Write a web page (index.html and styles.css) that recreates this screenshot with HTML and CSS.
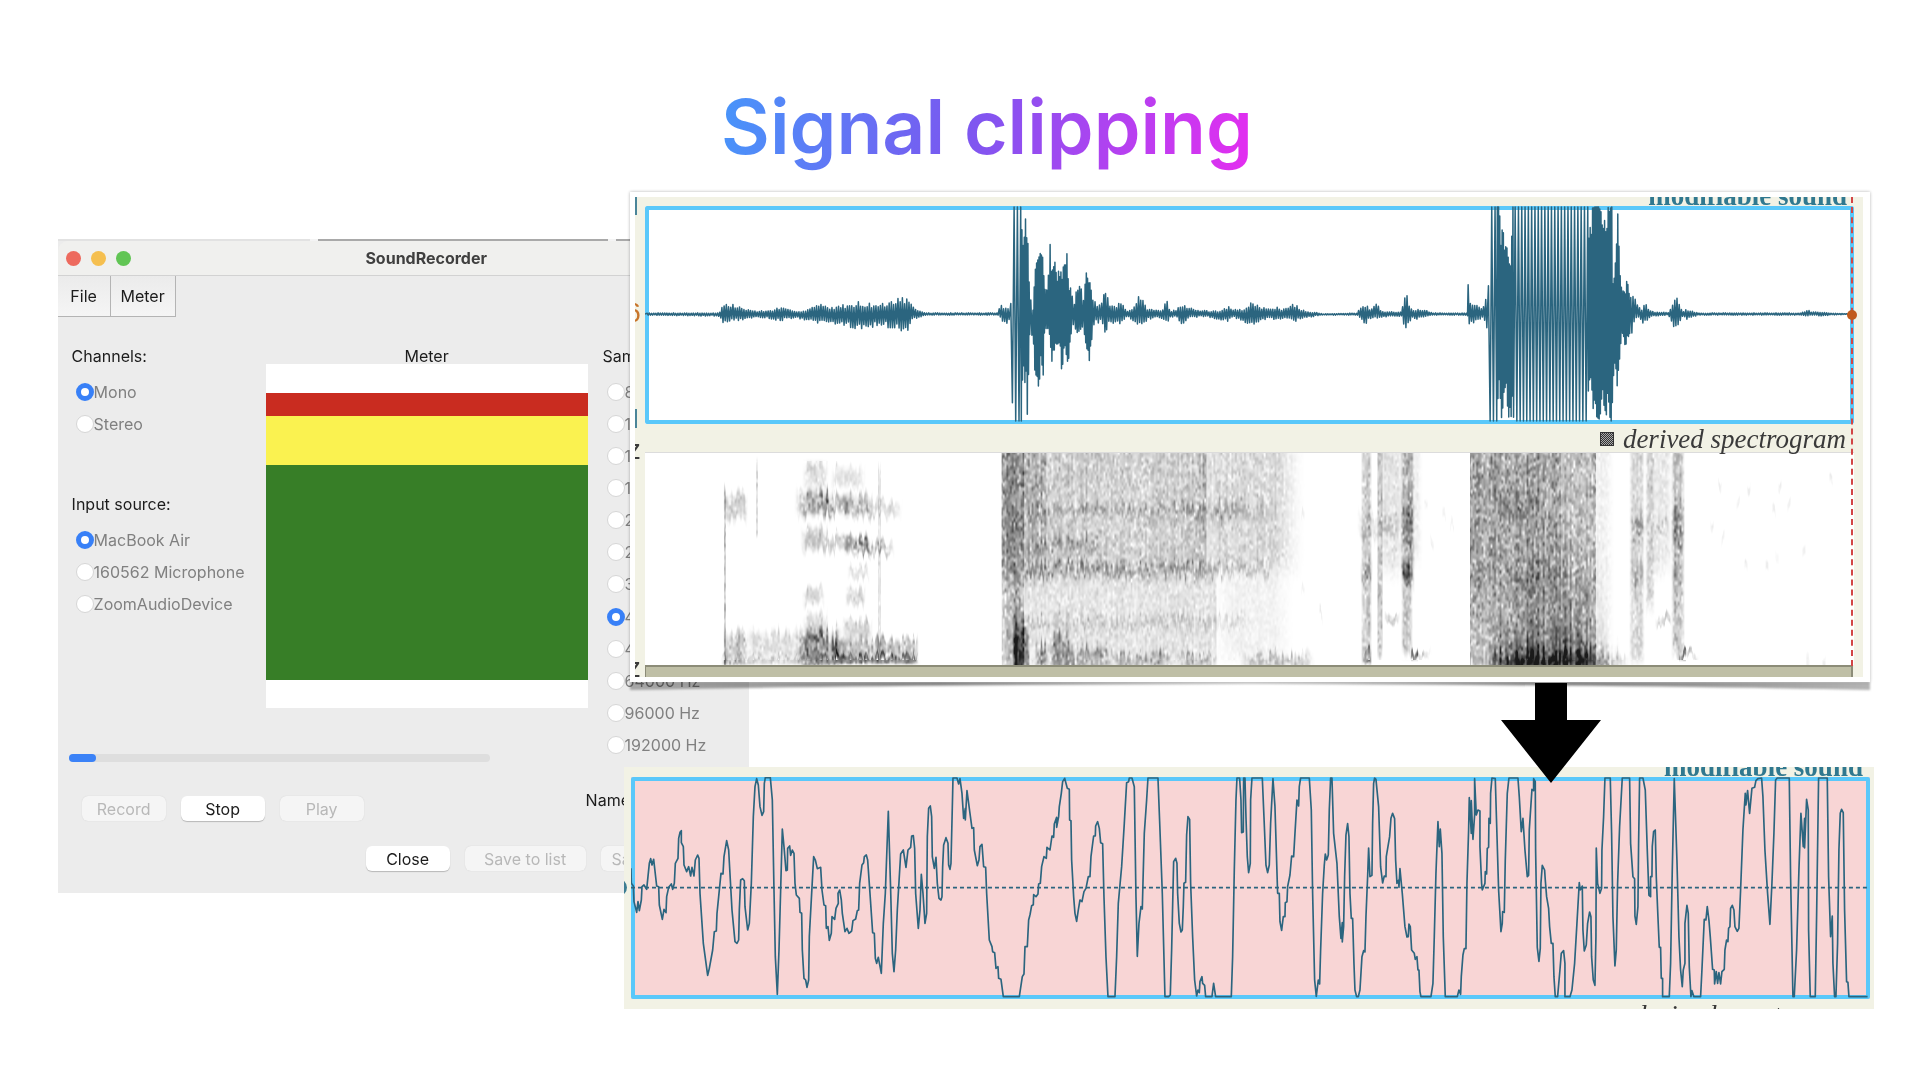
FILE: index.html
```html
<!DOCTYPE html>
<html lang="en">
<head>
<meta charset="utf-8">
<title>Signal clipping</title>
<link rel="stylesheet" href="styles.css">
</head>
<body>
<main class="slide">
  <h1 class="title"><span class="title-text">Signal clipping</span></h1>

  <section class="recorder" aria-label="SoundRecorder">
    <div class="backdrop-edge"><i class="edge-light"></i><i class="edge-dark"></i><i class="edge-dark"></i></div>
    <header class="titlebar">
      <div class="lights"><i class="light red"></i><i class="light amber"></i><i class="light green"></i></div>
      <h2 class="window-name">SoundRecorder</h2>
    </header>
    <nav class="menubar">
      <button class="menu menu-file">File</button>
      <button class="menu menu-meter">Meter</button>
    </nav>
    <div class="settings">
      <div class="sources">
        <fieldset class="group">
          <legend class="label">Channels:</legend>
          <div class="options">
            <label class="option"><input type="radio" name="channels" checked>Mono</label>
            <label class="option"><input type="radio" name="channels">Stereo</label>
          </div>
        </fieldset>
        <fieldset class="group">
          <legend class="label">Input source:</legend>
          <div class="options">
            <label class="option"><input type="radio" name="source" checked>MacBook Air</label>
            <label class="option"><input type="radio" name="source">160562 Microphone</label>
            <label class="option"><input type="radio" name="source">ZoomAudioDevice</label>
          </div>
        </fieldset>
      </div>
      <div class="meter">
        <div class="label meter-label">Meter</div>
        <div class="bands"><i class="band-red"></i><i class="band-yellow"></i><i class="band-green"></i></div>
      </div>
      <fieldset class="group">
        <legend class="label">Sampling frequency:</legend>
        <div class="options rates">
          <label class="option"><input type="radio" name="rate">8000 Hz</label>
          <label class="option"><input type="radio" name="rate">11025 Hz</label>
          <label class="option"><input type="radio" name="rate">12000 Hz</label>
          <label class="option"><input type="radio" name="rate">16000 Hz</label>
          <label class="option"><input type="radio" name="rate">22050 Hz</label>
          <label class="option"><input type="radio" name="rate">24000 Hz</label>
          <label class="option"><input type="radio" name="rate">32000 Hz</label>
          <label class="option"><input type="radio" name="rate" checked>44100 Hz</label>
          <label class="option"><input type="radio" name="rate">48000 Hz</label>
          <label class="option"><input type="radio" name="rate">64000 Hz</label>
          <label class="option"><input type="radio" name="rate">96000 Hz</label>
          <label class="option"><input type="radio" name="rate">192000 Hz</label>
        </div>
      </fieldset>
    </div>
    <div class="progress"><i class="progress-done"></i></div>
    <div class="actions transport">
      <button class="action" disabled>Record</button>
      <button class="action">Stop</button>
      <button class="action" disabled>Play</button>
      <span class="label name-label">Name:</span>
    </div>
    <div class="actions closing">
      <button class="action">Close</button>
      <button class="action wide" disabled>Save to list</button>
      <button class="action wide" disabled>Save &amp; Close</button>
    </div>
  </section>

  <section class="zoomed" aria-label="Clipped signal, zoomed in">
    <i class="origin-dot"></i>
    <div class="cut-top"><span class="sound-name">modifiable sound</span></div>
    <div class="frame pink">
      <svg class="trace" viewBox="0 0 3717 666" preserveAspectRatio="none" aria-hidden="true">
        <path class="zero" d="M0 332H3717"/>
        <g transform="translate(-33 -81)"><path d="M33 355L34 400 40 408 42 455 50 487 54 455 58 482 64 450 66 410 72 405 80 418 88 340 92 326 96 345 101 328 110 408 116 410 118 465 127 508 132 478 138 488 140 440 146 412 154 402 158 418 163 400 166 340 174 325 176 265 180 247 184 242 184 278 190 290 192 345 200 365 206 350 212 378 216 352 222 378 226 330 233 315 237 325 240 430 250 580 263 676 268 655 278 600 283 545 289 543 291 490 300 400 303 370 309 372 312 320 320 272 326 300 336 480 345 575 351 580 356 570 358 480 362 390 368 386 373 392 375 470 383 540 388 520 394 400 400 200 405 110 410 86 415 105 420 170 426 196 431 185 433 100 436 83 451 83 457 150 462 420 466 620 472 733 477 600 482 420 487 237 492 290 498 362 502 360 503 295 509 288 512 316 517 300 522 310 525 400 529 435 538 445 540 487 545 490 547 600 552 685 557 690 561 712 566 690 568 560 575 430 581 320 586 330 592 356 602 352 606 420 612 465 617 467 619 535 624 530 628 571 634 550 636 500 644 508 648 475 655 460 654 430 659 420 664 450 667 490 675 545 681 535 687 550 695 543 699 512 707 507 712 482 716 480 719 400 726 345 731 338 733 320 739 315 743 330 750 430 758 548 763 550 766 625 770 640 775 622 784 670 790 520 796 430 805 184 812 420 817 610 822 665 827 600 832 480 842 312 850 300 858 352 864 300 872 292 875 258 880 257 884 295 887 430 895 535 900 480 904 373 909 430 915 520 920 490 922 260 926 175 931 168 935 200 937 320 943 355 948 322 952 400 957 445 963 450 966 440 968 350 971 285 978 263 984 280 986 345 990 358 993 340 998 130 999 84 1011 84 1016 102 1020 86 1026 130 1031 205 1036 175 1036 210 1041 122 1050 190 1056 235 1061 233 1063 300 1072 347 1077 330 1080 290 1086 283 1091 350 1097 352 1100 430 1108 570 1116 590 1118 605 1124 608 1128 655 1134 650 1136 685 1143 688 1150 740 1198 740 1207 680 1212 672 1215 590 1222 590 1226 510 1230 495"/></g>
        <g transform="translate(1197 -81)"><path d="M0 495L5 467 10 464 11 434 18 440 24 432 26 402 31 400 35 350 42 320 49 325 51 292 60 300 66 258 71 262 73 222 80 202 80 232 86 200 88 170 94 130 98 95 104 85 112 115 118 118 119 210 123 212 125 330 131 440 135 490 140 514 145 480 150 450 156 455 162 425 168 415 175 380 180 380 183 320 191 258 196 258 197 228 203 215 208 235 212 278 218 281 222 440 228 620 234 740 255 740 260 620 265 460 275 350 283 220 290 98 296 95 298 84 306 84 313 110 318 440 322 619 327 520 333 470 337 477 339 400 343 250 350 150 354 84 384 84 390 240 397 430 405 740 416 740 421 735 425 600 431 335 437 325 441 340 443 430 448 520 453 546 457 540 460 470 462 400 467 397 470 255 474 200 479 208 482 400 488 560 494 690 500 738 504 720 508 728 510 695 516 680 518 700 524 706 527 740 546 740 551 700 557 740 604 740 608 620 613 360 618 150 621 84 629 84 633 150 635 248 640 246 641 84 645 84 648 200 652 320 656 368 661 340 662 150 666 84 697 84 702 200 708 345 713 368 718 345 722 220 729 86 735 170 743 430 748 430 750 515 755 541 760 500 765 500 766 458 771 455 773 410 780 375 785 318 791 320 795 250 801 150 806 168 808 110 812 84 838 84 844 180 848 430 854 690 859 739 865 690 869 702 872 600 878 430 883 345 886 312 890 330 895 315 898 180 902 84 906 84 911 250 921 340 928 500 933 565 937 518 937 576 941 530 944 380 948 255 953 221 957 260 960 430 964 505 968 505 972 640 975 720 980 740 985 740 990 720 996 620 1001 602 1005 606 1008 500 1013 380 1016 294 1020 380 1026 376 1028 220 1031 100 1034 84 1038 88 1046 170 1052 350 1058 399 1063 378 1068 380 1069 320 1079 260 1083 205 1088 190 1094 206 1097 330 1101 400 1106 390 1107 412 1110 356 1117 430 1125 530 1131 561 1135 560 1137 522 1141 530 1145 600 1153 610 1156 628 1161 620 1164 660 1167 660 1170 725 1173 740 1203 740 1209 700 1213 560 1218 370 1224 215 1228 290 1231 237 1236 310 1240 560 1246 740 1260 740"/></g>
        <g transform="translate(2457 -81)"><path d="M0 740L22 740 27 720 32 733 34 680 39 615 43 596 48 596 51 400 56 240 58 143 64 250 64 152 69 268 74 195 74 86 79 195 84 180 90 183 90 290 95 400 97 420 105 400 106 365 110 372 112 295 116 292 117 205 121 220 122 130 126 84 136 86 140 220 146 420 153 545 157 520 158 485 163 487 166 330 172 130 177 84 204 84 208 140 214 245 219 205 225 300 232 380 236 376 238 240 246 118 251 122 251 86 256 95 257 300 262 592 267 634 271 595 273 400 277 346 284 360 286 390 290 440 296 475 299 530 304 580 309 580 312 680 316 740 323 740 330 660 334 610 341 602 345 640 345 740 360 740 366 720 374 640 381 520 388 398 391 420 397 408 399 540 403 603 409 585 413 520 419 486 423 500 425 620 430 690 435 706 438 560 439 294 443 400 450 430 455 415 456 300 461 200 465 84 481 84 485 250 489 500 495 648 499 600 503 400 509 230 517 84 539 84 542 280 549 380 554 386 555 498 559 523 564 470 566 280 569 84 579 84 586 120 592 300 597 436 602 440 602 380 606 380 607 290 611 245 616 240 619 380 624 500 628 592 632 592 634 685 638 685 638 740 658 740 662 640 667 360 673 86 681 330 687 560 692 660 697 710 700 660 705 640 705 520 711 466 715 490 718 650 723 740 726 722 732 740 752 740 756 660 763 508 768 510 772 470 777 510 781 560 788 658 793 660 794 702 799 665 803 700 807 668 812 702 816 665 823 658 825 600 830 570 834 575 836 535 840 530 842 475 847 466 852 480 855 530 862 544 867 535 872 420 879 240 886 130 888 165 893 122 899 190 906 115 914 112 918 92 924 86 935 84 939 140 945 300 953 430 960 523 966 400 972 250 977 90 982 84 1018 84 1022 380 1029 740 1033 740 1040 600 1047 360 1053 190 1060 290 1064 205 1064 294 1070 148 1075 180 1076 540 1081 740 1096 740 1100 500 1106 84 1132 84 1136 380 1142 560 1147 498 1149 640 1154 740 1158 740 1163 580 1167 300 1171 190 1175 178 1180 188 1184 480 1190 695 1194 697 1197 740 1253 740"/></g>
      </svg>
    </div>
    <div class="cut-bottom"><em class="derived">derived spectrogram</em></div>
  </section>

  <svg class="arrow" viewBox="0 0 100 100" aria-hidden="true"><path d="M34 0H66V37H100L50 100 0 37H34Z"/></svg>

  <svg class="curl" viewBox="0 0 1241 10" preserveAspectRatio="none" aria-hidden="true">
    <defs><linearGradient id="curl-tone"><stop offset="0" stop-color="#b4b4b4"/><stop offset=".25" stop-color="#808080"/><stop offset=".5" stop-color="#d0d0d0"/><stop offset=".75" stop-color="#808080"/><stop offset="1" stop-color="#b4b4b4"/></linearGradient></defs>
    <path d="M0 0H1241V8Q1000 3 620 2 240 3 0 8Z" fill="url(#curl-tone)"/>
  </svg>
  <section class="paper" aria-label="Recorded sound and spectrogram">
    <div class="sheet">
      <i class="tick tick-top"></i><i class="tick tick-bottom"></i>
      <span class="scale scale-mid">6</span><span class="scale scale-high">z</span><span class="scale scale-low">z</span>
      <div class="cut-top"><span class="sound-name">modifiable sound</span></div>
      <div class="frame">
        <svg class="trace" viewBox="0 0 1209 218" preserveAspectRatio="none" aria-hidden="true"><path id="recording"/></svg>
      </div>
      <div class="caption">
        <svg class="swatch" viewBox="0 0 14 14" aria-hidden="true"><defs><pattern id="dots" width="2" height="2" patternUnits="userSpaceOnUse"><path d="M0 0h1v1H0zM1 1h1v1H1z" fill="#aaa"/></pattern></defs><path d="M0 0h14v14H0z" fill="#333"/><path d="M1 1h12v12H1z" fill="url(#dots)"/></svg>
        <em class="derived">derived spectrogram</em>
      </div>
      <canvas class="spectrogram" id="spectrogram" width="1209" height="212"></canvas>
      <div class="scrollbar"></div>
      <i class="cursor"></i><i class="cursor-dot"></i>
    </div>
  </section>
</main>
<script src="draw.js"></script>
</body>
</html>
```
FILE: styles.css
```css
* { box-sizing: border-box; }
body {
  margin: 0;
  background: #fff;
  color: #1c1c1c;
  font-family: Inter, "Liberation Sans", sans-serif;
  font-size: 16px;
  line-height: 20px;
}
i { display: block; font-style: normal; }
button, input { font: inherit; margin: 0; }
.slide { position: relative; min-height: 1080px; overflow: hidden; }

.title {
  margin: 0;
  padding: 77px 0 0 54px;
  text-align: center;
  font-size: 75px;
  font-weight: 600;
  line-height: 100px;
}
.title-text {
  background: linear-gradient(100deg, #4796fa 0%, #7a58f0 45%, #e52df0 100%);
  -webkit-background-clip: text;
  background-clip: text;
  color: transparent;
}

/* Recorder window */
.recorder {
  position: absolute;
  left: 3%;
  top: 239px;
  width: 36%;
  padding-bottom: 22px;
  background: #ececec;
  overflow: hidden;
  white-space: nowrap;
}
.backdrop-edge { display: flex; gap: 8px; height: 2px; background: #f4f4f4; }
.edge-light { flex: 0 0 252px; background: #e2e2e2; }
.edge-dark { flex: 0 0 290px; background: #a9a9a9; }
.titlebar {
  display: grid;
  align-items: center;
  height: 35px;
  background: #f0f0ee;
  border-bottom: 1px solid #d2d2d2;
  border-top-left-radius: 10px;
}
.lights { grid-area: 1 / 1; display: flex; gap: 10px; padding-left: 8px; }
.light { width: 15px; height: 15px; border-radius: 50%; }
.red { background: #ed6a5e; }
.amber { background: #f5bf4f; }
.green { background: #61c554; }
.window-name {
  grid-area: 1 / 1;
  margin: 0;
  padding-left: 46px;
  text-align: center;
  font-size: 16px;
  font-weight: 700;
  color: #3f3f3f;
}
.menubar { display: flex; height: 41px; }
.menu {
  padding: 0;
  border: solid #b4b4b4;
  border-width: 0 1px 1px 0;
  background: linear-gradient(#ebebeb, #f5f5f5);
  color: #1c1c1c;
}
.menu-file { width: 53px; }
.menu-meter { width: 65px; }

.settings {
  display: grid;
  grid-template-columns: 194px 322px 1fr;
  padding: 29px 0 0 14px;
}
.group { display: block; min-width: 0; margin: 0; padding: 0; border: 0; }
.group + .group { margin-top: 60px; }
.settings > .group { padding-left: 15px; }
.label { display: block; height: 20px; padding: 0; color: #1c1c1c; }
.meter-label { height: 18px; text-align: center; }
.options { display: flex; flex-direction: column; gap: 12px; padding: 16px 0 0 4px; }
.rates { height: 389px; gap: 0; justify-content: space-between; }
.option { display: flex; align-items: center; height: 20px; color: #808080; }
.option input {
  appearance: none;
  width: 18px;
  height: 18px;
  border: 1px solid #d6d6d6;
  border-radius: 50%;
  background: #fff;
}
.option input:checked { border: 5px solid #3880f7; }
.bands { height: 344px; padding: 29px 0 28px; background: #fff; }
.band-red { height: 23px; background: #c92c20; }
.band-yellow { height: 49px; background: #faf250; }
.band-green { height: 215px; background: #377e27; }

.progress {
  width: 421px;
  height: 8px;
  margin: -1px 0 0 11px;
  border-radius: 4px;
  background: #dedede;
}
.progress-done { width: 27px; height: 8px; border-radius: 4px; background: #3b82f7; }
.actions { display: flex; gap: 15px; }
.transport { margin-top: 34px; padding-left: 24px; }
.closing { margin-top: 25px; padding-left: 308px; }
.action {
  flex: none;
  width: 84px;
  height: 25px;
  padding: 0;
  border: 0;
  border-radius: 6px;
  background: #fff;
  box-shadow: 0 1px 1px #b8b8b8;
  color: #1c1c1c;
}
.action:disabled { background: #f5f5f5; box-shadow: 0 0 1px #c8c8c8; color: #b8b8b8; }
.wide { width: 121px; }
.name-label { margin: -6px 0 0 207px; }

/* Sound pictures */
.paper {
  position: absolute;
  left: 32.8%;
  right: 2.6%;
  top: 192px;
  padding: 5px 7px 5px 5px;
  background: #fff;
  box-shadow: 0 0 3px rgba(0, 0, 0, .3);
}
.curl { position: absolute; left: 32.8%; top: 682px; width: 64.6%; height: 10px; filter: blur(1px); mix-blend-mode: multiply; }
.sheet { position: relative; padding: 0 9px 0 10px; background: #f2f2e5; overflow: hidden; }
.cut-top { display: flex; justify-content: flex-end; align-items: flex-end; height: 9px; padding-right: 7px; overflow: hidden; }
.sound-name {
  flex: none;
  margin-bottom: -5px;
  color: #30788f;
  font-family: "Liberation Serif", serif;
  font-size: 27px;
  font-weight: 700;
  line-height: 30px;
}
.derived { color: #3a3a3a; font-family: "Liberation Serif", serif; font-size: 27px; line-height: 28px; }
.frame { height: 218px; background: #fff; position: relative; }
.frame::before {
  content: "";
  position: absolute;
  inset: 0;
  border: 4px solid #5ac8fa;
  border-radius: 2px;
}
.trace { position: relative; display: block; width: 100%; height: 100%; }
.trace path { fill: none; stroke: #2b657f; stroke-width: 1.5; stroke-linejoin: round; }
.caption { position: relative; display: flex; justify-content: flex-end; align-items: center; gap: 9px; height: 28px; padding: 2px 8px 0 0; }
.swatch { width: 14px; height: 14px; }
.spectrogram { display: block; width: 100%; height: 213px; border-top: 1px solid #dcdcdc; background: #fff; }
.scrollbar { height: 12px; margin-right: 1px; border: solid #8c8c78; border-width: 2px 2px 0 1px; background: #bfbfa6; }
.cursor { position: absolute; top: 0; bottom: 11px; right: 10px; border-left: 2px dashed #d24545; }
.cursor-dot { position: absolute; top: 113px; right: 6px; width: 10px; height: 10px; border-radius: 50%; background: #c05a1c; }
.tick { position: absolute; left: 0; width: 2px; background: #4a8599; }
.tick-top { top: 0; height: 18px; }
.tick-bottom { top: 212px; height: 19px; }
.scale { position: absolute; right: calc(100% - 6px); color: #3a3a3a; font-family: "Liberation Sans", sans-serif; font-size: 27px; }
.scale-mid { top: 106px; color: #c8742a; }
.scale-high { top: 243px; }
.scale-low { top: 461px; }

.zoomed {
  position: absolute;
  left: 32.5%;
  right: 2.4%;
  top: 767px;
  padding: 0 4px 0 7px;
  background: #f2f2e5;
  overflow: hidden;
}
.zoomed .cut-top { height: 10px; padding-right: 7px; }
.zoomed .derived { font-size: 28px; }
.zoomed .frame { height: 222px; }
.pink { background: #f8d5d5; }
.pink .trace path { stroke-width: 5; }
.pink .trace .zero { stroke-width: 5; stroke-dasharray: 12 9; }
.cut-bottom { display: flex; justify-content: flex-end; height: 10px; padding: 2px 6px 0 0; overflow: hidden; }
.origin-dot { position: absolute; left: -14px; top: 112px; width: 17px; height: 17px; border-radius: 50%; background: #3c7c92; }
.arrow { position: absolute; left: 78.2%; top: 683px; width: 100px; height: 100px; }
```
FILE: draw.js
```js
// Seeded generator, so that the drawing is the same on every load.
let seed = 7;
function random() {
  seed = (seed * 1664525 + 1013904223) % 4294967296;
  return seed / 4294967296;
}

// Envelope of the recording: position, height above and depth below zero.
const envelope = [
  [0,1,1],[73,1,2],[77,9,8],[85,9,6],[93,7,6],[101,4,5],[110,3,3],[122,3,4],[134,6,6],[146,3,4],[158,3,5],
  [167,7,8],[173,9,9],[183,6,9],[195,8,10],[203,9,12],[212,11,13],[220,10,13],[228,9,12],[236,9,10],[244,12,13],
  [252,14,15],[259,16,16],[263,11,14],[267,6,5],[273,3,3],[281,1,1],[352,1,1],[354,13,3],[357,8,10],[361,7,8],
  [364,10,6],[366,107,107],[375,107,107],[376,92,107],[377,60,50],[379,78,65],[380,100,60],[382,70,97],
  [384,15,20],[387,5,20],[390,54,63],[392,52,76],[395,65,45],[397,50,68],[399,28,10],[402,18,20],[404,82,20],
  [406,30,48],[408,52,35],[411,36,30],[414,41,30],[416,38,57],[419,45,30],[421,62,45],[423,20,50],[424,30,30],
  [427,8,12],[430,22,18],[434,29,20],[437,18,10],[441,45,40],[444,30,42],[446,20,22],[449,12,8],[455,8,8],
  [459,23,18],[461,20,15],[463,7,5],[469,9,11],[475,10,8],[481,3,3],[487,4,6],[492,17,12],[497,12,12],[501,5,5],
  [510,4,3],[516,4,6],[521,15,9],[524,3,3],[530,4,2],[536,10,10],[542,6,4],[550,4,3],[559,3,2],[567,3,4],
  [575,3,6],[581,7,7],[587,4,3],[595,4,7],[603,10,9],[611,8,9],[619,6,5],[630,6,5],[638,5,4],[648,9,7],
  [654,5,5],[660,2,4],[668,2,2],[677,0,1],[711,1,1],[714,6,5],[719,10,10],[724,4,4],[730,10,4],[736,2,3],
  [754,2,2],[756,6,3],[759,23,21],[762,13,11],[766,5,3],[770,4,5],[777,4,3],[787,1,1],[821,1,1],[822,29,8],
  [825,9,11],[830,8,5],[836,4,4],[839,12,9],[841,18,14],[842,34,107],[844,107,107],[850,107,107],[853,107,60],
  [855,75,100],[859,75,70],[862,55,90],[865,40,105],[867,107,85],[868,107,107],[941,107,107],[944,80,70],
  [948,107,90],[953,107,107],[957,98,80],[961,95,90],[965,107,107],[966,107,107],[967,33,60],[969,45,43],
  [971,76,70],[972,92,60],[974,40,40],[976,25,18],[979,20,32],[981,32,22],[984,20,22],[987,19,14],[989,15,5],
  [993,7,3],[996,5,8],[999,10,8],[1003,5,4],[1007,2,2],[1022,2,1],[1026,10,10],[1028,18,16],[1032,14,11],
  [1036,3,3],[1040,4,5],[1044,3,4],[1052,1,1],[1154,1,1],[1161,4,2],[1164,2,1],[1177,2,2],[1183,1,1],[1207,0,0]
];

function drawRecording() {
  const zero = 108;
  let d = 'M0 ' + zero;
  let i = 0;
  let up = true;
  for (let x = 1; x < 1207;) {
    while (i < envelope.length - 2 && envelope[i + 1][0] < x) i++;
    const a = envelope[i], b = envelope[i + 1];
    const t = (x - a[0]) / (b[0] - a[0]);
    const side = up ? 1 : 2;
    let h = a[side] + (b[side] - a[side]) * t;
    const clipped = h > 102;
    const striped = (x > 868 && x < 942) || (x > 364 && x < 374) || (x > 841 && x < 850);
    x += striped ? 1.65 : h > 20 ? 0.6 : 1.1;
    if (!clipped) h *= h > 20 ? 0.85 + random() * 0.3 : 0.65 + random() * 0.5;
    d += 'L' + x.toFixed(1) + ' ' + (up ? zero - h : zero + h).toFixed(1);
    up = !up;
  }
  document.getElementById('recording').setAttribute('d', d);
}

// Energy patches: left, right, top, bottom, strength, horizontal softness, vertical softness.
const patches = [
  [79,80,45,208,.2,1,12],[82,98,46,58,.18,5,12],[82,98,185,205,.22,5,12],[111,112,12,75,.14,1,10],
  [162,178,45,54,.3,14,14],[180,200,48,55,.22,6,9],[202,222,48,56,.23,7,12],[225,248,53,58,.12,10,8],
  [162,176,82,90,.2,8,12],[182,200,86,92,.16,6,8],[204,220,89,94,.34,7,10],[222,242,93,97,.2,8,7],
  [164,176,16,26,.14,8,12],[192,213,20,28,.1,8,10],[162,174,140,146,.14,6,9],[204,216,140,146,.14,5,9],
  [206,220,117,121,.1,5,7],[233,235,20,190,.1,1,12],[112,145,185,200,.12,14,12],
  [162,185,188,202,.44,14,18],[190,268,190,203,.26,6,8],[202,222,170,182,.15,6,7],[190,268,204,208,.24,5,4],
  [80,270,206,209,.12,6,4],[164,176,168,182,.15,8,12],
  [357,378,0,212,.14,1,3],[357,560,0,110,.19,2,25],[357,400,0,90,.12,2,50],[575,625,0,105,.15,36,25],
  [385,620,115,118,.12,10,8],[385,580,57,59,.1,10,9],[400,440,91,95,.12,22,10],[580,610,54,61,.08,25,12],
  [357,570,124,200,.11,2,20],[590,625,130,195,.05,25,20],[380,590,168,171,.08,20,9],
  [370,381,190,212,.5,4,36],[370,373,135,212,.2,3,30],[393,399,200,212,.3,5,16],[410,420,195,212,.32,7,24],
  [428,460,204,212,.22,10,14],[478,515,205,211,.22,14,9],[542,562,205,211,.16,12,7],[608,655,206,211,.18,16,9],
  [718,724,0,205,.2,3,14],[733,736,0,190,.22,2,18],[740,752,0,100,.1,6,35],[717,750,68,78,.08,6,12],
  [718,724,117,121,.2,4,11],[719,724,198,207,.18,3,4],[743,750,165,168,.18,5,5],
  [759,765,0,125,.27,5,16],[759,764,120,195,.2,4,14],[759,765,66,82,.2,4,20],[759,765,118,123,.18,4,14],
  [766,772,200,204,.34,1,5],[772,776,201,203,.16,11,4],[767,770,0,90,.07,8,30],
  [825,950,0,208,.26,1,10],[825,915,0,120,.11,1,70],[860,885,50,58,.12,18,16],[895,920,150,212,.15,45,80],
  [865,940,200,212,.18,26,50],[856,960,205,212,.2,16,22],[850,975,206,211,.14,10,9],[950,958,0,190,.06,12,25],
  [988,995,0,198,.16,5,18],[1003,1006,0,140,.16,4,26],[1011,1020,0,100,.09,8,30],[989,995,70,78,.14,5,14],
  [989,995,117,125,.14,5,14],[990,1018,70,74,.08,7,9],[1014,1022,165,168,.18,5,5],
  [1030,1035,0,192,.25,5,16],[1030,1035,62,80,.24,5,20],[1030,1035,118,124,.14,4,14],
  [1034,1040,200,204,.34,1,5],[1040,1044,201,203,.16,11,4]
];

// Faint isolated marks: position and height in the plot.
const marks = [
  [657,60],[657,135],[675,160],[780,50],[786,90],[798,62],[806,70],[1074,30],[1066,68],[1077,85],[1103,36],
  [1092,48],[1134,30],[1128,58],[1143,48],[1131,100],[1121,112],[1158,100],[1185,24],[1100,112],[1162,208],[1178,209]
];
for (const m of marks) patches.push([m[0], m[0] + 1, m[1], m[1] + 3, 0.05, 2, 5]);

function ramp(v, low, high, soft) {
  const t = Math.min((v - low) / soft + 1, (high - v) / soft + 1);
  if (t <= 0) return 0;
  if (t >= 1) return 1;
  return t * t * (3 - 2 * t);
}

function drawSpectrogram() {
  const canvas = document.getElementById('spectrogram');
  const w = canvas.width, h = canvas.height;
  const ctx = canvas.getContext('2d');
  const image = ctx.createImageData(w, h);
  // Grain is narrow in time and long in frequency.
  const cellW = 1.8, cellH = 4;
  const gw = Math.ceil(w / cellW) + 2, gh = Math.ceil(h / cellH) + 3;
  const grain = Array.from({ length: gw * gh }, () => (random() + random()) / 2);
  const streak = Array.from({ length: gw }, random);
  const phase = Array.from({ length: gw }, random);
  const column = (c, y) => {
    const v = y / cellH + phase[c];
    const r = Math.floor(v), f = v - r;
    const s = f * f * (3 - 2 * f);
    return grain[r * gw + c] * (1 - s) + grain[(r + 1) * gw + c] * s;
  };
  for (let x = 0; x < w; x++) {
    const c = Math.floor(x / cellW), f = x / cellW - c;
    const lift = streak[c] * (1 - f) + streak[c + 1] * f - 0.5;
    for (let y = 0; y < h; y++) {
      const n = column(c, y) * (1 - f) + column(c + 1, y) * f - 0.5;
      const yy = y < 8 || y > h - 6 ? y : y + lift * 14;
      let energy = 0;
      for (const p of patches) {
        if (x < p[0] - p[5] || x > p[1] + p[5] || yy < p[2] - p[6] || yy > p[3] + p[6]) continue;
        energy += p[4] * ramp(x, p[0], p[1], p[5]) * ramp(yy, p[2], p[3], p[6]);
      }
      const speck = n * 0.6 * Math.min(1, energy * 3);
      const tone = Math.max(0, Math.min(0.9, energy * (0.95 + lift * 0.4) + speck));
      const k = (y * w + x) * 4;
      image.data[k] = image.data[k + 1] = image.data[k + 2] = 255 - tone * 255;
      image.data[k + 3] = 255;
    }
  }
  ctx.putImageData(image, 0, 0);
}

drawRecording();
drawSpectrogram();
```
